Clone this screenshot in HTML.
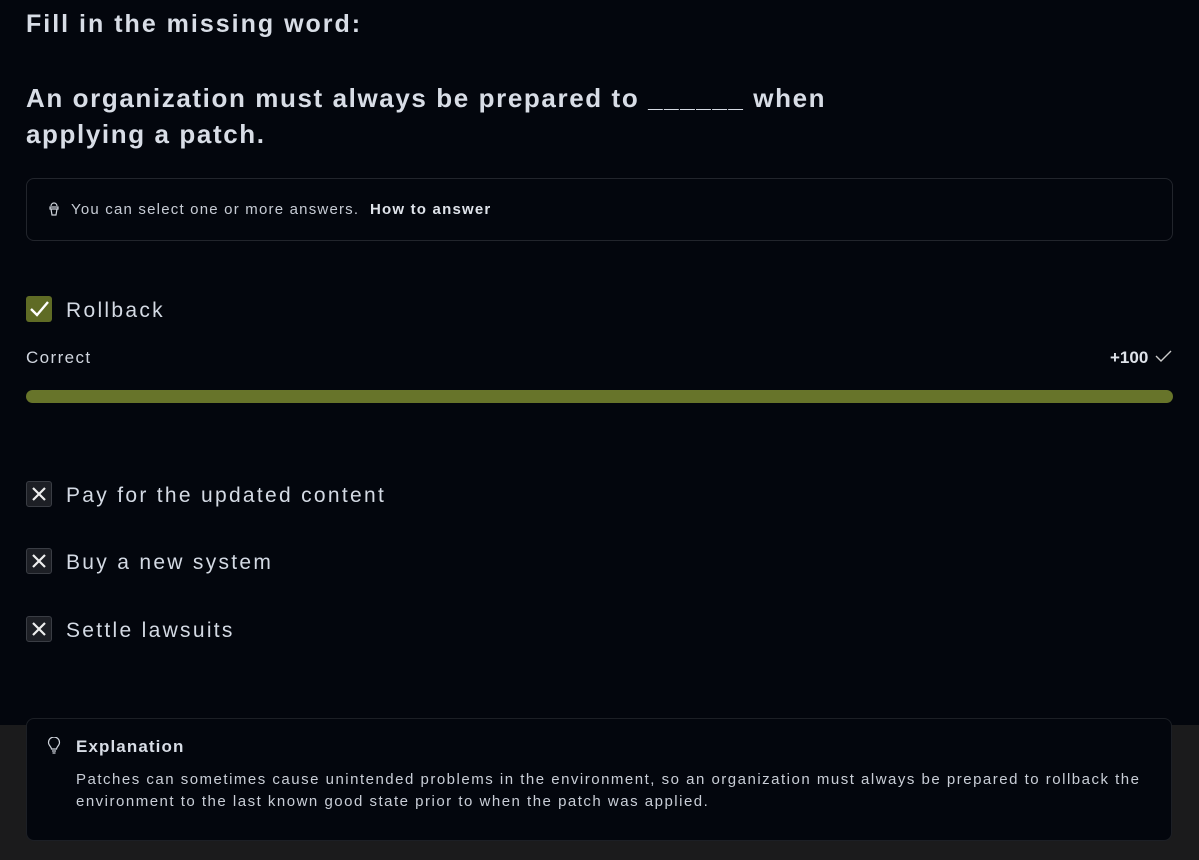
<!DOCTYPE html>
<html><head><style>
html,body{margin:0;padding:0;width:1199px;height:860px;overflow:hidden;background:#03060d;font-family:"Liberation Sans",sans-serif;color:#dfe3ea;position:relative}
.bot{position:absolute;left:0;top:725px;width:1199px;height:135px;background:#1b1b1c}
.a{position:absolute;white-space:nowrap}
h1{position:absolute;margin:0;font-weight:bold;color:#d8dde6;white-space:nowrap}
.cb{position:absolute;left:26px;width:26px;height:26px;border-radius:3px;box-sizing:border-box}
.x{background:#1d1f25;border:1px solid #3a3d44}
.opt{position:absolute;left:66px;font-size:21px;color:#d4dae4;letter-spacing:2.3px;white-space:nowrap}
</style></head><body>
<div class="bot"></div>
<h1 style="left:26px;top:10px;font-size:25px;letter-spacing:2px">Fill in the missing word:</h1>
<h1 style="left:26px;top:80px;font-size:26px;line-height:36px;letter-spacing:1.6px">An organization must always be prepared to ______ when<br>applying a patch.</h1>
<div class="a" style="left:26px;top:178px;width:1147px;height:63px;border:1px solid #22252c;border-radius:8px;box-sizing:border-box"></div>
<svg class="a" style="left:48px;top:200px" width="12" height="16" viewBox="0 0 12 16"><path d="M3 6 a3 3 0 0 1 6 0 M2 7h8v2H2z M3 9l1 6h4l1-6" fill="none" stroke="#cfd4dc" stroke-width="1.2"/></svg>
<div class="a" style="left:71px;top:201px;font-size:15px;color:#c7ccd5;letter-spacing:1.2px">You can select one or more answers. &nbsp;<b style="color:#dfe3ea">How to answer</b></div>
<div class="cb" style="top:296px;background:#5f6b25;border-radius:3px"></div>
<svg class="a" style="left:26px;top:296px" width="26" height="26"><path d="M5 13l6 6L22 6" fill="none" stroke="#fff" stroke-width="2.4"/></svg>
<div class="opt" style="top:299px">Rollback</div>
<div class="a" style="left:26px;top:348px;font-size:17px;color:#d0d5de;letter-spacing:1.4px">Correct</div>
<div class="a" style="left:1110px;top:348px;font-size:17px;font-weight:bold">+100</div>
<svg class="a" style="left:1155px;top:349px" width="18" height="14"><path d="M1 7l5 5L16 2" fill="none" stroke="#ccc" stroke-width="1.4"/></svg>
<div class="a" style="left:26px;top:390px;width:1147px;height:13px;border-radius:7px;background:#67742a"></div>
<div class="cb x" style="top:481px"></div><svg class="a" style="left:26px;top:481px" width="26" height="26"><path d="M7 7l12 12M19 7L7 19" stroke="#eee" stroke-width="2.2"/></svg>
<div class="opt" style="top:484px">Pay for the updated content</div>
<div class="cb x" style="top:548px"></div><svg class="a" style="left:26px;top:548px" width="26" height="26"><path d="M7 7l12 12M19 7L7 19" stroke="#eee" stroke-width="2.2"/></svg>
<div class="opt" style="top:551px">Buy a new system</div>
<div class="cb x" style="top:616px"></div><svg class="a" style="left:26px;top:616px" width="26" height="26"><path d="M7 7l12 12M19 7L7 19" stroke="#eee" stroke-width="2.2"/></svg>
<div class="opt" style="top:619px">Settle lawsuits</div>
<div class="a" style="left:26px;top:718px;width:1146px;height:123px;background:#03060d;border:1px solid #1c1f25;border-radius:8px;box-sizing:border-box"></div>
<svg class="a" style="left:47px;top:737px" width="14" height="18" viewBox="0 0 14 18"><path d="M4.5 12c0-2-3-3.5-3-6.5a5.5 5.5 0 0 1 11 0c0 3-3 4.5-3 6.5z M5 14h4 M5.5 16h3" fill="none" stroke="#cfd4dc" stroke-width="1.2"/></svg>
<div class="a" style="left:76px;top:737px;font-size:17px;font-weight:bold;color:#d8dde6;letter-spacing:1.1px">Explanation</div>
<div class="a" style="left:76px;top:769px;font-size:15px;line-height:22px;color:#c9ced7;letter-spacing:1.5px">Patches can sometimes cause unintended problems in the environment, so an organization must always be prepared to rollback the<br>environment to the last known good state prior to when the patch was applied.</div>
</body></html>
